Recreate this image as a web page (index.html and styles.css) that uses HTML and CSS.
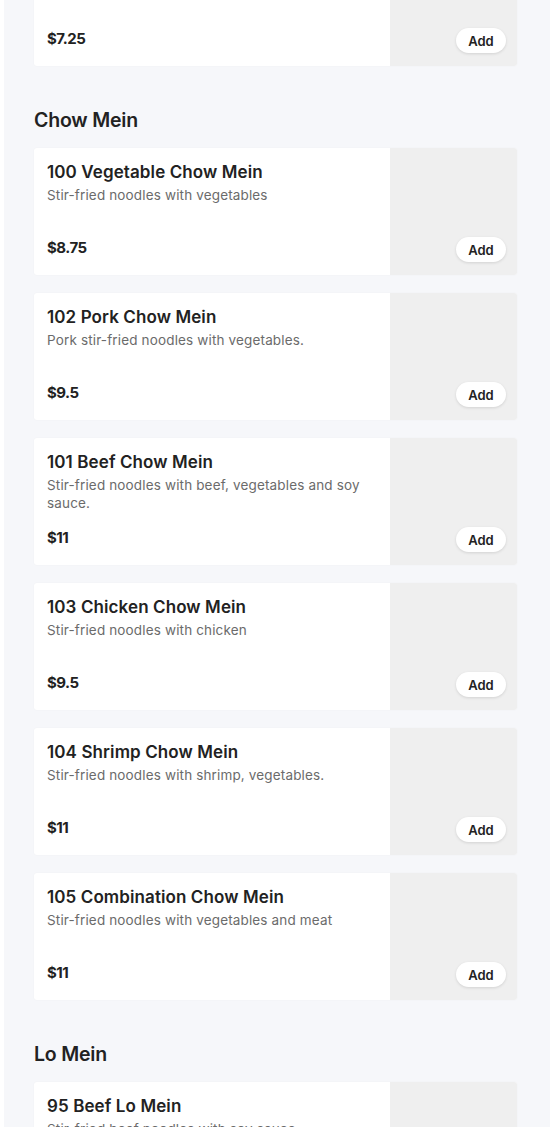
FILE: index.html
```html
<!DOCTYPE html>
<html lang="en">

<head>
    <meta charset="UTF-8">
    <meta name="viewport" content="width=device-width, initial-scale=1.0">
    <title>Menu</title>
    <link rel="stylesheet" href="styles.css">
</head>

<body>
    <main class="menu">
        <!-- Tail of the previous section, scrolled mostly out of view -->
        <section class="menu-section menu-section--cut">
            <div class="item-list">
                <div class="item-card">
                    <div class="item-info">
                        <div class="item-title">&nbsp;</div>
                        <div class="item-desc">&nbsp;</div>
                        <div class="item-price">$7.25</div>
                    </div>
                    <div class="item-image">
                        <button class="add-button">Add</button>
                    </div>
                </div>
            </div>
        </section>

        <section class="menu-section">
            <h2>Chow Mein</h2>
            <div class="item-list">
                <div class="item-card">
                    <div class="item-info">
                        <div class="item-title">100 Vegetable Chow Mein</div>
                        <div class="item-desc">Stir-fried noodles with vegetables</div>
                        <div class="item-price">$8.75</div>
                    </div>
                    <div class="item-image">
                        <button class="add-button">Add</button>
                    </div>
                </div>
                <div class="item-card">
                    <div class="item-info">
                        <div class="item-title">102 Pork Chow Mein</div>
                        <div class="item-desc">Pork stir-fried noodles with vegetables.</div>
                        <div class="item-price">$9.5</div>
                    </div>
                    <div class="item-image">
                        <button class="add-button">Add</button>
                    </div>
                </div>
                <div class="item-card">
                    <div class="item-info">
                        <div class="item-title">101 Beef Chow Mein</div>
                        <div class="item-desc">Stir-fried noodles with beef, vegetables and soy sauce.</div>
                        <div class="item-price">$11</div>
                    </div>
                    <div class="item-image">
                        <button class="add-button">Add</button>
                    </div>
                </div>
                <div class="item-card">
                    <div class="item-info">
                        <div class="item-title">103 Chicken Chow Mein</div>
                        <div class="item-desc">Stir-fried noodles with chicken</div>
                        <div class="item-price">$9.5</div>
                    </div>
                    <div class="item-image">
                        <button class="add-button">Add</button>
                    </div>
                </div>
                <div class="item-card">
                    <div class="item-info">
                        <div class="item-title">104 Shrimp Chow Mein</div>
                        <div class="item-desc">Stir-fried noodles with shrimp, vegetables.</div>
                        <div class="item-price">$11</div>
                    </div>
                    <div class="item-image">
                        <button class="add-button">Add</button>
                    </div>
                </div>
                <div class="item-card">
                    <div class="item-info">
                        <div class="item-title">105 Combination Chow Mein</div>
                        <div class="item-desc">Stir-fried noodles with vegetables and meat</div>
                        <div class="item-price">$11</div>
                    </div>
                    <div class="item-image">
                        <button class="add-button">Add</button>
                    </div>
                </div>
            </div>
        </section>

        <section class="menu-section">
            <h2>Lo Mein</h2>
            <div class="item-list">
                <div class="item-card">
                    <div class="item-info">
                        <div class="item-title">95 Beef Lo Mein</div>
                        <div class="item-desc">Stir-fried beef noodles with soy sauce.</div>
                        <div class="item-price">$11</div>
                    </div>
                    <div class="item-image">
                        <button class="add-button">Add</button>
                    </div>
                </div>
            </div>
        </section>
    </main>
</body>

</html>
```
FILE: styles.css
```css
body {
    margin: 0;
    padding: 0;
    background-color: #fff;
    color: #222;
    font-family: Inter, "Noto Sans", Arial, sans-serif;
    overflow: hidden;
}

/* Light panel, with a thin white strip on its left */
.menu {
    margin-left: 4px;
    height: 1127px;
    overflow: hidden;
    background-color: #f6f7fa;
    padding: 0 33px 0 30px;
}

.menu-section {
    padding-bottom: 24px;
}

/* Previous section is scrolled so only its last card bottom shows */
.menu-section--cut {
    margin-top: -61px;
}

.menu-section h2 {
    font-size: 19.5px;
    font-weight: 600;
    line-height: 26px;
    margin: 0;
    padding: 17px 0 15px;
    letter-spacing: -0.2px;
}

.item-list {
    display: flex;
    flex-direction: column;
    gap: 18px;
}

.item-card {
    display: grid;
    grid-template-columns: 1fr 127px;
    height: 127px;
    background-color: #fff;
    border-radius: 3px;
    overflow: hidden;
    box-shadow: 0 0 2px rgba(0, 0, 0, 0.04);
}

.item-info {
    display: flex;
    flex-direction: column;
    padding: 12px 13px 17px;
}

.item-title {
    font-size: 17px;
    font-weight: 600;
    line-height: 24px;
    letter-spacing: 0.1px;
}

.item-desc {
    margin-top: 2px;
    font-size: 13.5px;
    line-height: 18px;
    letter-spacing: 0.15px;
    color: #6b6b6b;
}

.item-price {
    margin-top: auto;
    font-size: 15px;
    font-weight: 700;
    line-height: 20px;
    letter-spacing: -0.5px;
}

.item-image {
    background-color: #efefef;
    display: flex;
    align-items: flex-end;
    justify-content: flex-end;
    padding: 0 11px 13px 0;
}

.add-button {
    width: 50px;
    height: 25px;
    border: none;
    border-radius: 13px;
    background-color: #fff;
    box-shadow: 0 1px 3px rgba(0, 0, 0, 0.12);
    font-family: Inter, "Noto Sans", Arial, sans-serif;
    font-size: 13px;
    font-weight: 600;
    color: #222;
    padding: 0;
    cursor: pointer;
}
```
